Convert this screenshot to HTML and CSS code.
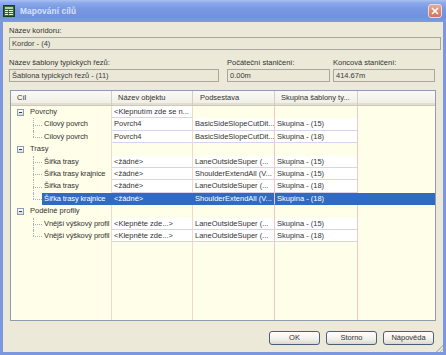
FILE: index.html
```html
<!DOCTYPE html>
<html lang="cs">
<head>
<meta charset="utf-8">
<title>Mapování cílů</title>
<link rel="stylesheet" href="styles.css">
</head>
<body>
<div class="window">
  <div class="titlebar">
    <svg class="appicon" width="12" height="12" viewBox="0 0 12 12">
      <rect x="0.5" y="0.5" width="11" height="11" fill="#2f6b34" stroke="#1c3d20"/>
      <rect x="2" y="2" width="8" height="2" fill="#a8d8a0"/>
      <rect x="2" y="5" width="8" height="1" fill="#e8f4e4"/>
      <rect x="2" y="7" width="8" height="1" fill="#e8f4e4"/>
      <rect x="2" y="9" width="8" height="1" fill="#e8f4e4"/>
      <rect x="5" y="4" width="1" height="7" fill="#2f6b34"/>
    </svg>
    <span class="title">Mapování cílů</span>
    <span class="close">
      <svg width="8" height="8" viewBox="0 0 8 8"><path d="M1 1L7 7M7 1L1 7" stroke="#fff" stroke-width="1.6"/></svg>
    </span>
  </div>
  <div class="client">
    <div class="field">
      <div class="label">Název koridoru:</div>
      <div class="box box-wide">Kordor - (4)</div>
    </div>
    <div class="fieldrow">
      <div class="field f1">
        <div class="label">Název šablony typických řezů:</div>
        <div class="box">Šablona typických řezů - (11)</div>
      </div>
      <div class="field f2">
        <div class="label">Počáteční staničení:</div>
        <div class="box">0.00m</div>
      </div>
      <div class="field f3">
        <div class="label">Koncová staničení:</div>
        <div class="box">414.67m</div>
      </div>
    </div>
    <div class="table">
      <div class="thead">
        <div class="th th1">Cíl</div>
        <div class="th">Název objektu</div>
        <div class="th">Podsestava</div>
        <div class="th">Skupina šablony ty...</div>
        <div class="th th-rest"></div>
      </div>
      <div class="tbody">
        <div class="row cat">
          <div class="c c1"><span class="exp"></span><span class="txt">Povrchy</span></div>
          <div class="c cw">&lt;Klepnutím zde se n...</div>
          <div class="c"></div>
          <div class="c c4"></div>
          <div class="c c5"></div>
        </div>
        <div class="row leaf">
          <div class="c c1"><span class="conn"></span><span class="txt">Cílový povrch</span></div>
          <div class="c cw">Povrch4</div>
          <div class="c cw">BasicSideSlopeCutDit...</div>
          <div class="c cw c4">Skupina - (15)</div>
          <div class="c c5"></div>
        </div>
        <div class="row leaf">
          <div class="c c1"><span class="conn last"></span><span class="txt">Cílový povrch</span></div>
          <div class="c cw">Povrch4</div>
          <div class="c cw">BasicSideSlopeCutDit...</div>
          <div class="c cw c4">Skupina - (18)</div>
          <div class="c c5"></div>
        </div>
        <div class="row cat">
          <div class="c c1"><span class="exp"></span><span class="txt">Trasy</span></div>
          <div class="c"></div>
          <div class="c"></div>
          <div class="c c4"></div>
          <div class="c c5"></div>
        </div>
        <div class="row leaf">
          <div class="c c1"><span class="conn"></span><span class="txt">Šířka trasy</span></div>
          <div class="c cw">&lt;žádné&gt;</div>
          <div class="c cw">LaneOutsideSuper (...</div>
          <div class="c cw c4">Skupina - (15)</div>
          <div class="c c5"></div>
        </div>
        <div class="row leaf">
          <div class="c c1"><span class="conn"></span><span class="txt">Šířka trasy krajnice</span></div>
          <div class="c cw">&lt;žádné&gt;</div>
          <div class="c cw">ShoulderExtendAll (V...</div>
          <div class="c cw c4">Skupina - (15)</div>
          <div class="c c5"></div>
        </div>
        <div class="row leaf">
          <div class="c c1"><span class="conn"></span><span class="txt">Šířka trasy</span></div>
          <div class="c cw">&lt;žádné&gt;</div>
          <div class="c cw">LaneOutsideSuper (...</div>
          <div class="c cw c4">Skupina - (18)</div>
          <div class="c c5"></div>
        </div>
        <div class="row leaf sel">
          <div class="c c1"><span class="conn last"></span><span class="txt">Šířka trasy krajnice</span></div>
          <div class="c cw">&lt;žádné&gt;</div>
          <div class="c cw">ShoulderExtendAll (V...</div>
          <div class="c cw c4">Skupina - (18)</div>
          <div class="c c5"></div>
        </div>
        <div class="row cat">
          <div class="c c1"><span class="exp"></span><span class="txt">Podélné profily</span></div>
          <div class="c"></div>
          <div class="c"></div>
          <div class="c c4"></div>
          <div class="c c5"></div>
        </div>
        <div class="row leaf">
          <div class="c c1"><span class="conn"></span><span class="txt">Vnější výškový profil</span></div>
          <div class="c cw">&lt;Klepněte zde...&gt;</div>
          <div class="c cw">LaneOutsideSuper (...</div>
          <div class="c cw c4">Skupina - (15)</div>
          <div class="c c5"></div>
        </div>
        <div class="row leaf">
          <div class="c c1"><span class="conn last"></span><span class="txt">Vnější výškový profil</span></div>
          <div class="c cw">&lt;Klepněte zde...&gt;</div>
          <div class="c cw">LaneOutsideSuper (...</div>
          <div class="c cw c4">Skupina - (18)</div>
          <div class="c c5"></div>
        </div>
        <div class="filler">
          <div class="c c1"></div>
          <div class="c"></div>
          <div class="c"></div>
          <div class="c c4"></div>
          <div class="c c5"></div>
        </div>
      </div>
    </div>
    <div class="buttons">
      <div class="btn">OK</div>
      <div class="btn">Storno</div>
      <div class="btn">Nápověda</div>
    </div>
    <div class="grip"></div>
  </div>
</div>
</body>
</html>
```

FILE: styles.css
```css
* { box-sizing: border-box; }
html, body { margin: 0; padding: 0; }
body {
  width: 446px;
  height: 355px;
  overflow: hidden;
  font-family: "Liberation Sans", Arial, sans-serif;
  font-size: 7.5px;
  color: #333333;
  background: #ffffff;
}
.window {
  width: 446px;
  height: 355px;
  background: #7b97e0;
  display: flex;
  flex-direction: column;
}
.titlebar {
  height: 22px;
  flex: none;
  display: flex;
  align-items: center;
  padding: 0 4px 0 3px;
  background: linear-gradient(#aac2f3 0, #8ba8ea 3px, #7898e2 9px, #7292df 17px, #7e9be2 22px);
}
.appicon { flex: none; margin-right: 5px; }
.title {
  flex: 1;
  color: #d6e2f8;
  font-weight: bold;
  font-size: 8.3px;
  letter-spacing: 0.1px;
}
.close {
  width: 14px;
  height: 14px;
  border: 1px solid #f1d9d2;
  border-radius: 3px;
  background: linear-gradient(#e9ab96, #d9846e 60%, #cf7560);
  display: flex;
  align-items: center;
  justify-content: center;
}
.client {
  flex: 1;
  margin: 0 3px 3px;
  background: #ece9d8;
  padding: 4px 7px 7px 6px;
  display: flex;
  flex-direction: column;
  position: relative;
}
.label {
  height: 10px;
  line-height: 10px;
  white-space: nowrap;
}
.box {
  margin-top: 1px;
  height: 13px;
  line-height: 11px;
  padding-left: 2px;
  border: 1px solid #a8a79e;
  background: #ebe8d8;
  color: #3a3a3a;
  white-space: nowrap;
  overflow: hidden;
}
.box-wide { margin-right: -5px; }
.fieldrow { display: flex; margin-top: 8px; }
.f1 { width: 210px; }
.f2 { width: 103px; margin-left: 8px; }
.f3 { width: 102px; margin-left: 3px; }

.table {
  margin-top: 8px;
  margin-left: 1px;
  height: 231px;
  border: 1px solid #8e9cb0;
  background: #fffee9;
  display: flex;
  flex-direction: column;
}
.thead,
.row,
.filler {
  display: grid;
  grid-template-columns: 101px 81px 82px 83px 1fr;
}
.thead {
  height: 15px;
  flex: none;
  background: linear-gradient(#fbfaf6, #efede4);
  border-bottom: 1px solid #cdc9b8;
  box-shadow: inset 0 -2px #e2dfd0;
}
.th {
  line-height: 13px;
  padding-left: 6px;
  white-space: nowrap;
  overflow: hidden;
  border-right: 1px solid #d4d0c1;
}
.th:nth-child(3) { padding-left: 7px; }
.th-rest { border-right: none; }
.tbody {
  flex: 1;
  display: flex;
  flex-direction: column;
}
.row { height: 12.4px; flex: none; }
.c {
  white-space: nowrap;
  overflow: hidden;
  padding-left: 2px;
  line-height: 12px;
  border-right: 1px solid #eedad0;
}
.c4 { border-right-color: #efc9c9; }
.row .c:nth-child(3) { border-right-color: #efc9c9; }
.filler .c:nth-child(3) { border-right-color: #efc9c9; }
.c5 { border-right: none; }
.cw {
  background: #ffffff;
  border-bottom: 1px solid #d7d4ee;
  line-height: 11px;
}
.c1 {
  display: flex;
  align-items: center;
  padding-left: 6px;
}
.exp {
  flex: none;
  width: 7px;
  height: 7px;
  border: 1px solid #8d9db2;
  background: linear-gradient(90deg, transparent 1px, #2f3f5f 1px, #2f3f5f 4px, transparent 4px) center / 100% 1px no-repeat, linear-gradient(#ffffff, #dcdcd2);
  margin-right: 6px;
}
.leaf .c1 { padding-left: 22px; align-items: stretch; }
.conn {
  flex: none;
  position: relative;
  width: 9px;
  margin-right: 2px;
}
.conn::before {
  content: "";
  position: absolute;
  left: 0;
  top: 0;
  bottom: 0;
  border-left: 1px dotted #b0b0b0;
}
.conn.last::before { bottom: 50%; }
.conn::after {
  content: "";
  position: absolute;
  left: 0;
  right: 0;
  top: 50%;
  border-top: 1px dotted #b0b0b0;
}
.leaf .txt { line-height: 12px; letter-spacing: -0.12px; }
.sel .conn { margin-right: 0; }
.sel .txt {
  flex: 1;
  background: #316ac5;
  color: #ffffff;
  padding-left: 2px;
}
.sel .c1 { border-right: none; }
.sel .cw,
.sel .c5 {
  background: #316ac5;
  color: #ffffff;
  border-color: #316ac5;
}
.filler { flex: 1; }

.buttons {
  display: flex;
  justify-content: flex-end;
  gap: 6px;
  margin-top: 10px;
  padding-right: 2px;
}
.btn {
  width: 51px;
  height: 14px;
  line-height: 12px;
  text-align: center;
  border: 1px solid #4a5f7c;
  border-radius: 3px;
  background: linear-gradient(#ffffff, #f1f0ea 60%, #dcd8cc);
  color: #333333;
}
.grip {
  position: absolute;
  right: 0;
  bottom: 0;
  width: 7px;
  height: 7px;
  background: linear-gradient(135deg, transparent 50%, #c4c0b0 50%, #c4c0b0 60%, transparent 60%, transparent 72%, #c4c0b0 72%, #c4c0b0 82%, transparent 82%);
}
```
